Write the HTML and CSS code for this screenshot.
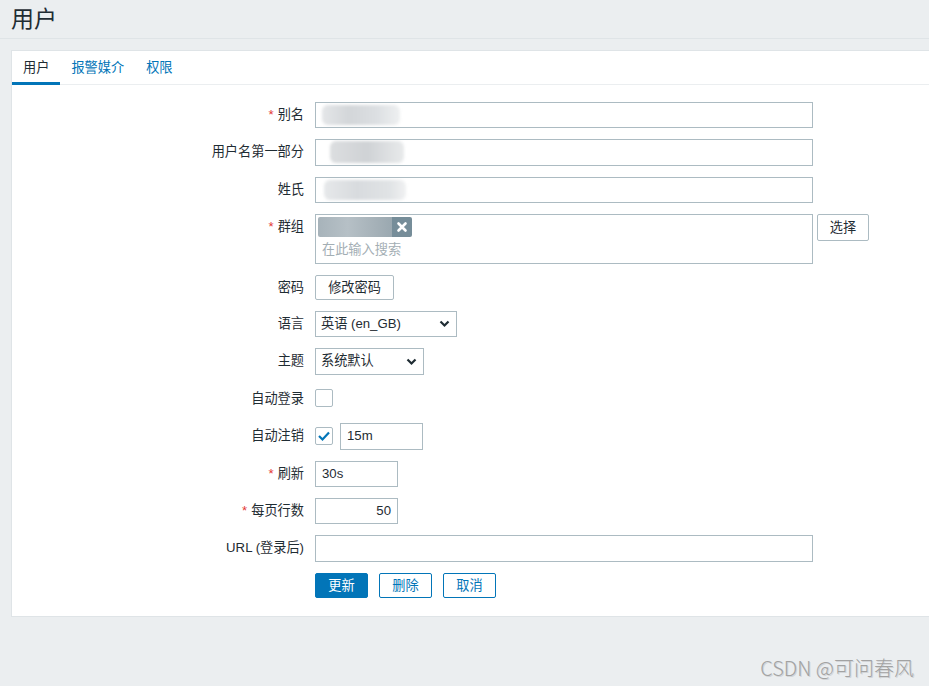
FILE: index.html
```html
<!DOCTYPE html>
<html lang="zh-CN">
<head>
<meta charset="utf-8">
<title>用户</title>
<link rel="stylesheet" href="styles.css">
</head>
<body>
<header class="page-header"><h1 class="title">用户</h1></header>
<main class="card">
  <nav class="tabs">
    <a class="tab active">用户</a>
    <a class="tab">报警媒介</a>
    <a class="tab">权限</a>
  </nav>
  <form class="form">
    <div class="row">
      <label class="label req">别名</label>
      <div class="field"><div class="input wide smudged"><span class="blur b1"></span></div></div>
    </div>
    <div class="row">
      <label class="label">用户名第一部分</label>
      <div class="field"><div class="input wide smudged"><span class="blur b2"></span></div></div>
    </div>
    <div class="row">
      <label class="label">姓氏</label>
      <div class="field"><div class="input wide smudged"><span class="blur b3"></span></div></div>
    </div>
    <div class="row">
      <label class="label req">群组</label>
      <div class="field hstack">
        <div class="multiselect">
          <div class="chip"><span class="chip-text"></span><span class="chip-x"><svg width="12" height="12" viewBox="0 0 12 12"><path d="M2.5 2.5 L9.5 9.5 M9.5 2.5 L2.5 9.5" stroke="#fff" stroke-width="2.6" stroke-linecap="round"/></svg></span></div>
          <div class="placeholder">在此输入搜索</div>
        </div>
        <button type="button" class="btn grey select-btn">选择</button>
      </div>
    </div>
    <div class="row short">
      <label class="label">密码</label>
      <div class="field"><button type="button" class="btn grey pw-btn">修改密码</button></div>
    </div>
    <div class="row">
      <label class="label">语言</label>
      <div class="field"><div class="select lang">英语 (en_GB)<svg class="chev" width="11" height="8" viewBox="0 0 11 8"><path d="M1.5 1.5 L5.5 5.5 L9.5 1.5" fill="none" stroke="#1f2c33" stroke-width="2.2"/></svg></div></div>
    </div>
    <div class="row">
      <label class="label">主题</label>
      <div class="field"><div class="select theme">系统默认<svg class="chev" width="11" height="8" viewBox="0 0 11 8"><path d="M1.5 1.5 L5.5 5.5 L9.5 1.5" fill="none" stroke="#1f2c33" stroke-width="2.2"/></svg></div></div>
    </div>
    <div class="row">
      <label class="label">自动登录</label>
      <div class="field"><span class="checkbox"></span></div>
    </div>
    <div class="row">
      <label class="label">自动注销</label>
      <div class="field hstack tight"><span class="checkbox"><svg width="14" height="12" viewBox="0 0 14 12"><path d="M2 6 L5.5 9.5 L12 2.5" fill="none" stroke="#0275b8" stroke-width="2.2"/></svg></span><div class="input small">15m</div></div>
    </div>
    <div class="row">
      <label class="label req">刷新</label>
      <div class="field"><div class="input small">30s</div></div>
    </div>
    <div class="row">
      <label class="label req">每页行数</label>
      <div class="field"><div class="input small right">50</div></div>
    </div>
    <div class="row">
      <label class="label">URL (登录后)</label>
      <div class="field"><div class="input wide"></div></div>
    </div>
    <div class="row short">
      <span class="label"></span>
      <div class="field hstack buttons">
        <button type="button" class="btn primary">更新</button>
        <button type="button" class="btn alt">删除</button>
        <button type="button" class="btn alt">取消</button>
      </div>
    </div>
  </form>
</main>
<div class="watermark">CSDN @可问春风</div>
</body>
</html>
```
FILE: styles.css
```css
html, body {
  margin: 0;
  padding: 0;
}
body {
  background: #ebeef0;
  font-family: "Liberation Sans", "Noto Sans CJK SC", sans-serif;
  font-size: 13.2px;
  color: #1f2c33;
  overflow: hidden;
  height: 686px;
  position: relative;
}
.page-header {
  height: 38px;
  border-bottom: 1px solid #dfe4e7;
  padding-left: 11px;
}
.title {
  margin: 0;
  font-weight: normal;
  font-size: 23px;
  line-height: 38px;
  color: #1f2c33;
}
.card {
  display: block;
  margin: 11px 0 0 11px;
  background: #fff;
  border: 1px solid #dfe4e7;
  border-right: none;
}
.tabs {
  display: flex;
  height: 33px;
  border-bottom: 1px solid #ebeef0;
}
.tab {
  display: block;
  padding: 2px 11px 0;
  line-height: 29px;
  height: 29px;
  border-bottom: 3px solid transparent;
  color: #0275b8;
  cursor: pointer;
}
.tab.active {
  color: #1f2c33;
  border-bottom-color: #0275b8;
}
.form {
  display: flex;
  flex-direction: column;
  gap: 11px;
  padding: 17px 0 18px 0;
}
.row {
  display: flex;
  gap: 11px;
  min-height: 26.4px;
}
.row.short {
  min-height: 25.3px;
}
.label {
  width: 292px;
  flex: none;
  text-align: right;
  padding-top: 4px;
  line-height: 18px;
  box-sizing: border-box;
}
.label.req::before {
  content: "*";
  color: #e33734;
  margin-right: 4px;
}
.field {
  display: flex;
  align-items: flex-start;
}
.hstack {
  gap: 4px;
}
.hstack.tight {
  gap: 7px;
  align-items: center;
}
.hstack.buttons {
  gap: 11px;
}
.input {
  height: 26.4px;
  box-sizing: border-box;
  border: 1px solid #acbbc2;
  background: #fff;
  padding: 0 6px;
  line-height: 24.4px;
  position: relative;
  overflow: hidden;
}
.input.wide { width: 498px; }
.input.small { width: 83px; }
.input.right { text-align: right; }
.blur {
  position: absolute;
  filter: blur(1.5px);
  border-radius: 6px;
}
.b1 {
  left: 6px; top: 2px; width: 78px; height: 20px;
  background: linear-gradient(90deg, #e4e6e8 0%, #d3d6d9 35%, #dcdfe2 70%, #eef0f1 100%);
}
.b2 {
  left: 14px; top: 1px; width: 74px; height: 22px;
  background: linear-gradient(90deg, #dcdee0 0%, #cfd2d5 50%, #e8eaeb 100%);
}
.b3 {
  left: 8px; top: 2px; width: 82px; height: 20px;
  background: linear-gradient(90deg, #e6e8ea 0%, #d8dbde 40%, #e0e3e5 80%, #f0f1f2 100%);
}
.multiselect {
  width: 498px;
  height: 49.5px;
  box-sizing: border-box;
  border: 1px solid #acbbc2;
  background: #fff;
  padding: 2px 2px 0 2px;
}
.chip {
  display: flex;
  width: 94px;
  height: 20px;
  border-radius: 2px;
  overflow: hidden;
}
.chip-text {
  flex: 1;
  background: linear-gradient(90deg, #a7b3ba 0%, #b6c0c6 40%, #a4b0b7 80%, #9aa8b0 100%);
}
.chip-x {
  width: 20px;
  background: #768d99;
  display: flex;
  align-items: center;
  justify-content: center;
}
.placeholder {
  color: #a3aeb4;
  padding-left: 4px;
  padding-top: 2px;
  line-height: 22px;
}
.select {
  height: 26.4px;
  box-sizing: border-box;
  border: 1px solid #acbbc2;
  background: #fff;
  padding: 0 6px 0 5px;
  line-height: 24.4px;
  display: flex;
  align-items: center;
  justify-content: space-between;
}
.select.lang { width: 142px; }
.select.theme { width: 109px; }
.chev { flex: none; }
.checkbox {
  width: 18px;
  height: 18px;
  box-sizing: border-box;
  border: 1px solid #acbbc2;
  border-radius: 2px;
  background: #fff;
  margin-top: 3.5px;
  display: flex;
  align-items: center;
  justify-content: center;
}
.hstack.tight .checkbox { margin-top: 0; }
.btn {
  height: 25.3px;
  box-sizing: border-box;
  padding: 0 11px;
  font-family: inherit;
  font-size: 13.2px;
  line-height: 23px;
  border-radius: 2px;
  background: #fff;
  cursor: pointer;
  margin: 0;
}
.btn.grey {
  border: 1px solid #acbbc2;
  color: #1f2c33;
}
.select-btn {
  width: 52px;
  height: 26.4px;
}
.pw-btn {
  width: 79px;
}
.btn.primary {
  background: #0275b8;
  border: 1px solid #0275b8;
  color: #fff;
  width: 53px;
}
.btn.alt {
  border: 1px solid #0275b8;
  color: #0275b8;
  width: 53px;
}
.watermark {
  position: absolute;
  right: 15px;
  top: 654px;
  font-family: "Noto Sans CJK SC", sans-serif;
  font-weight: 300;
  font-size: 20px;
  line-height: 28px;
  color: #a2a2a2;
  text-shadow: 1px 1px 0 #d2d5d8;
}
```
